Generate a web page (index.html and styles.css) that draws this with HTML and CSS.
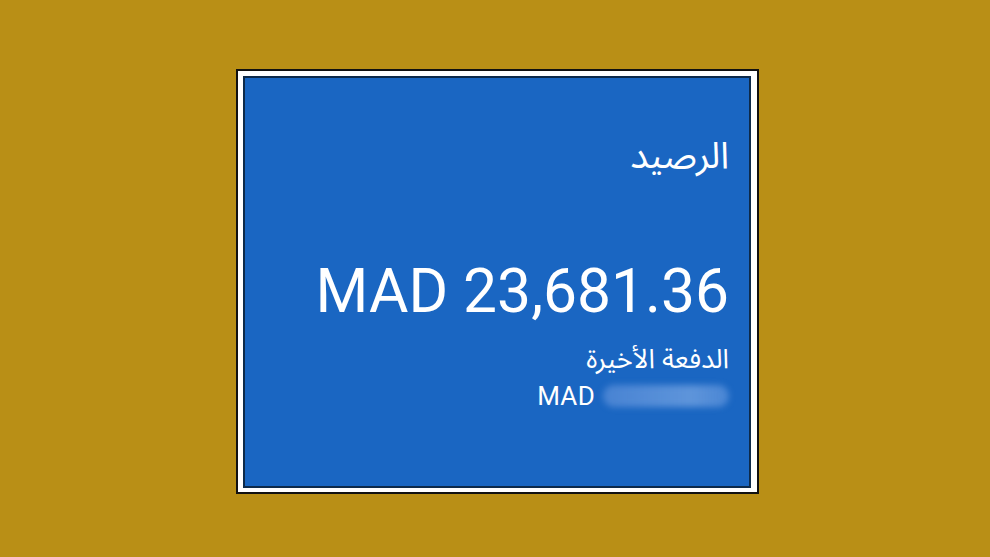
FILE: index.html
```html
<!DOCTYPE html>
<html lang="ar">
<head>
<meta charset="utf-8">
<link rel="stylesheet" href="styles.css">
</head>
<body>
<div class="stage">
  <div class="frame">
    <div class="card" dir="rtl">
      <div class="title">الرصيد</div>
      <div class="amount" dir="ltr">MAD 23,681.36</div>
      <div class="last-label">الدفعة الأخيرة</div>
      <div class="last-row" dir="ltr"><span class="cur">MAD</span><span class="blur"></span></div>
    </div>
  </div>
</div>
</body>
</html>
```

FILE: styles.css
```css
html, body {
  margin: 0;
  padding: 0;
  background: #b98f16;
  width: 990px;
  height: 557px;
  overflow: hidden;
}
.stage {
  padding-top: 69px;
  padding-left: 236px;
}
.frame {
  border: 2px solid #111;
  background: #fff;
  padding: 5px;
  box-sizing: content-box;
  width: 509px;
  height: 411px;
}
.card {
  border: 2px solid #0d2a4a;
  background: #1a66c2;
  color: #fff;
  box-sizing: border-box;
  width: 508px;
  height: 412px;
  padding: 58px 20px 0 0;
  font-family: Roboto, "Noto Sans", "DejaVu Sans", sans-serif;
  text-align: right;
}
.title {
  font-family: "Noto Sans Arabic", "DejaVu Sans", sans-serif;
  font-size: 37px;
  line-height: 40px;
  height: 40px;
}
.amount {
  margin-top: 81px;
  font-size: 60.5px;
  line-height: 70px;
  text-align: right;
  letter-spacing: 0;
}
.last-label {
  margin-top: 18px;
  font-family: "Noto Sans Arabic", "DejaVu Sans", sans-serif;
  font-size: 27px;
  line-height: 30px;
}
.last-row {
  display: flex;
  justify-content: flex-end;
  align-items: center;
  gap: 8px;
  height: 30px;
  margin-top: 6px;
}
.cur {
  font-size: 26px;
  line-height: 30px;
  letter-spacing: 0.3px;
}
.blur {
  width: 126px;
  height: 22px;
  border-radius: 11px;
  background: linear-gradient(90deg, rgba(110,155,225,0.55), rgba(140,180,235,0.6) 70%, rgba(120,165,230,0.5));
  filter: blur(3px);
}
```
